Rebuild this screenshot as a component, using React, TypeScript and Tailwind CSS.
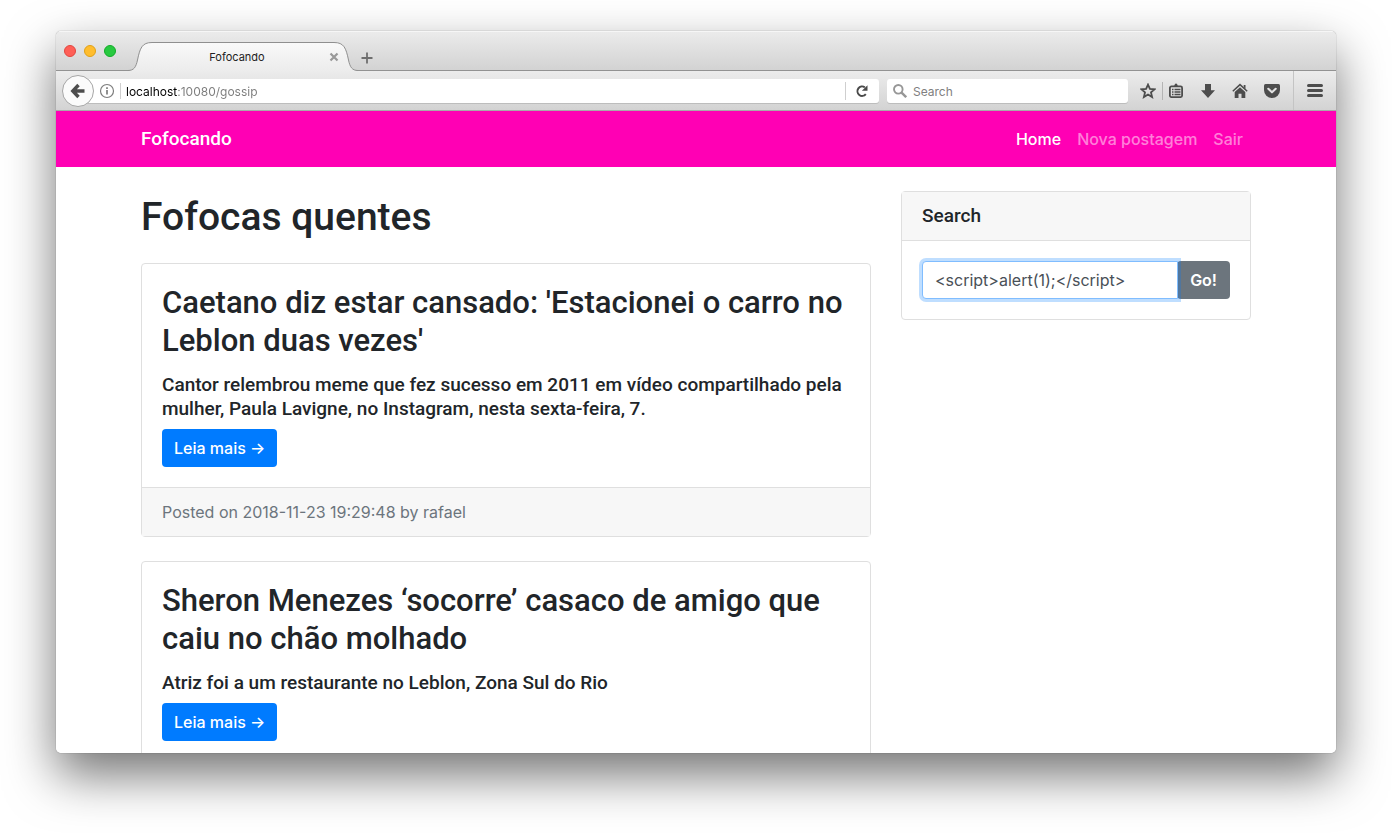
import React from "react";

type Post = {
  title: string;
  subtitle: string;
  footer?: string;
};

const posts: Post[] = [
  {
    title: "Caetano diz estar cansado: 'Estacionei o carro no Leblon duas vezes'",
    subtitle:
      "Cantor relembrou meme que fez sucesso em 2011 em vídeo compartilhado pela mulher, Paula Lavigne, no Instagram, nesta sexta-feira, 7.",
    footer: "Posted on 2018-11-23 19:29:48 by rafael",
  },
  {
    title: "Sheron Menezes ‘socorre’ casaco de amigo que caiu no chão molhado",
    subtitle: "Atriz foi a um restaurante no Leblon, Zona Sul do Rio",
  },
];

function TabStrip() {
  return (
    <div className="flex h-10 items-end border-t border-[#f6f6f6] bg-linear-to-b from-[#ebebeb] to-[#d2d2d2] shadow-[inset_0_-1px_0_#929292]">
      <div className="flex h-full w-[72px] items-center gap-2 pb-0.5 pl-2">
        <button aria-label="Close window" className="size-3 rounded-full border border-[#e2463f] bg-[#ff5f57]" />
        <button aria-label="Minimize window" className="size-3 rounded-full border border-[#e1a116] bg-[#ffbd2e]" />
        <button aria-label="Zoom window" className="size-3 rounded-full border border-[#12ac28] bg-[#28c940]" />
      </div>
      <div className="relative flex h-[30px] w-[230px] items-center pt-0.5">
        <svg viewBox="0 0 230 30" className="absolute inset-0 h-full w-full" aria-hidden="true">
          <defs>
            <linearGradient id="tab" x1="0" x2="0" y1="0" y2="1">
              <stop offset="0" stopColor="#f9f9f9" />
              <stop offset="1" stopColor="#ececec" />
            </linearGradient>
          </defs>
          <path
            d="M0 29.5C6 29.5 8 26 9.5 19C12 7 14 1.5 24 1.5H206C216 1.5 218 7 220.500 19C222 26 224 29.500 230 29.500V30H0Z"
            fill="url(#tab)"
          />
          <path
            d="M0 29.5C6 29.5 8 26 9.5 19C12 7 14 1.5 24 1.5H206C216 1.5 218 7 220.500 19C222 26 224 29.500 230 29.500"
            fill="none"
            stroke="#8f8f8f"
          />
        </svg>
        <span className="relative flex-1 pl-5 text-center text-[11px] leading-4 text-[#222]">Fofocando</span>
        <button aria-label="Close tab" className="relative mr-4 flex size-4 items-center justify-center">
          <svg viewBox="0 0 10 10" className="size-2.5" aria-hidden="true">
            <path d="M1.500 1.500L8.500 8.500M8.500 1.500L1.500 8.500" stroke="#999" strokeWidth="2.200" />
          </svg>
        </button>
      </div>
      <button aria-label="New tab" className="ml-px flex h-[26px] w-4 items-center justify-center">
        <svg viewBox="0 0 12 12" className="size-3" aria-hidden="true">
          <path d="M6 0.500V11.500M0.500 6H11.500" stroke="#6e6e6e" strokeWidth="1.800" />
        </svg>
      </button>
    </div>
  );
}

function Toolbar() {
  return (
    <div className="flex h-10 items-center border-b border-[#a9a9a9] bg-linear-to-b from-[#ececec] to-[#d3d3d3] pl-1.5">
      <button
        aria-label="Back"
        className="relative z-10 flex size-8 shrink-0 items-center justify-center rounded-full border border-[#a6a6a6] bg-[#fbfbfb]"
      >
        <svg viewBox="0 0 16 16" className="size-4" aria-hidden="true">
          <path d="M8.500 2L2.800 8L8.500 14M3 8H14.500" fill="none" stroke="#4d4d4d" strokeWidth="3.400" />
        </svg>
      </button>
      <div className="-ml-4 flex h-6 flex-1 items-center rounded-[3px] bg-white pl-[21px] shadow-[0_1px_0_#bdbdbd]">
        <svg viewBox="0 0 16 16" className="size-4 shrink-0" aria-hidden="true">
          <circle cx="8" cy="8" r="6.500" fill="none" stroke="#7d7d7d" strokeWidth="1.200" />
          <path d="M8 7V11.500M8 4.200V5.900" stroke="#7d7d7d" strokeWidth="1.700" />
        </svg>
        <span className="ml-[5px] h-4 w-px bg-[#cfcfcf]" />
        <input
          aria-label="Address"
          defaultValue="localhost:10080/gossip"
          className="ml-[5px] min-w-0 flex-1 bg-[linear-gradient(90deg,#000_52px,#7b7b7b_52px)] bg-clip-text pt-0.5 text-xs leading-4 text-transparent outline-none"
        />
        <button
          aria-label="Reload"
          className="flex h-[18px] w-[34px] shrink-0 items-center justify-center border-l border-[#cfcfcf]"
        >
          <svg viewBox="0 0 14 14" className="mr-0.5 size-3.5" aria-hidden="true">
            <path d="M10.800 10.200A4.700 4.700 0 1 1 9.800 3.300" fill="none" stroke="#4a4a4a" strokeWidth="2" />
            <path d="M12.500 1.200V6.800H6.900Z" fill="#4a4a4a" />
          </svg>
        </button>
      </div>
      <label className="ml-2 flex h-6 w-[241px] items-center rounded-[3px] bg-white pl-1.5 shadow-[0_1px_0_#bdbdbd]">
        <svg viewBox="0 0 14 14" className="size-3.5 shrink-0" aria-hidden="true">
          <circle cx="5.300" cy="5.300" r="4.300" fill="none" stroke="#979797" strokeWidth="1.900" />
          <path d="M8.300 8.300L13.200 13.200" stroke="#979797" strokeWidth="2.400" />
        </svg>
        <input
          aria-label="Search the web"
          placeholder="Search"
          className="ml-1.5 min-w-0 flex-1 pt-0.5 text-xs leading-4 outline-none placeholder:text-[#808080]"
        />
      </label>
      <button aria-label="Bookmark this page" className="ml-3 flex size-4 items-center justify-center">
        <svg viewBox="0 0 16 16" className="size-4" aria-hidden="true">
          <path
            d="M8 1.600L9.900 5.900L14.500 6.300L11 9.400L12.100 14L8 11.500L3.900 14L5 9.400L1.500 6.300L6.100 5.900Z"
            fill="none"
            stroke="#4d4d4d"
            strokeWidth="1.800"
          />
        </svg>
      </button>
      <span className="ml-1.5 h-[18px] w-px bg-[#b4b4b4]" />
      <button aria-label="Bookmarks" className="ml-[5px] flex size-4 items-center justify-center">
        <svg viewBox="0 0 16 16" className="size-4" aria-hidden="true">
          <rect x="1.900" y="3.400" width="12.200" height="10.700" rx="1.500" fill="none" stroke="#4d4d4d" strokeWidth="1.800" />
          <path d="M4.500 3.500L6.500 2.500Q6.500 0.500 8 0.500T9.500 2.500L11.500 3.500Z" fill="#4d4d4d" />
          <path d="M4 6.500H5.500M4 9H5.500M4 11.500H5.500M6.500 6.500H12.500M6.500 9H12.500M6.500 11.500H12.500" stroke="#4d4d4d" strokeWidth="1.300" />
        </svg>
      </button>
      <button aria-label="Downloads" className="ml-4 flex size-4 items-center justify-center">
        <svg viewBox="0 0 16 16" className="size-4" aria-hidden="true">
          <path d="M5 1H11V7.300H15L8 15L1 7.300H5Z" fill="#4d4d4d" />
        </svg>
      </button>
      <button aria-label="Home page" className="ml-4 flex size-4 items-center justify-center">
        <svg viewBox="0 0 16 16" className="size-4" aria-hidden="true">
          <path d="M0.800 8.300L8 1.600L15.200 8.300" fill="none" stroke="#4d4d4d" strokeWidth="1.500" />
          <path d="M11.700 2H13.500V6L11.700 4.300Z" fill="#4d4d4d" />
          <path d="M8 4.200L13.300 9V15H9.500V10.800H6.500V15H2.700V9Z" fill="#4d4d4d" />
        </svg>
      </button>
      <button aria-label="Save to Pocket" className="ml-4 flex size-4 items-center justify-center">
        <svg viewBox="0 0 16 16" className="size-4" aria-hidden="true">
          <path d="M1.500 1H14.500Q16 1 16 2.500V7A8 8 0 0 1 0 7V2.500Q0 1 1.500 1Z" fill="#4d4d4d" />
          <path d="M4.300 5.800L8 9.300L11.700 5.800" fill="none" stroke="#e2e2e2" strokeWidth="2.100" strokeLinecap="round" strokeLinejoin="round" />
        </svg>
      </button>
      <span className="ml-[13px] h-full w-px bg-[#c4c4c4]" />
      <button aria-label="Open menu" className="mx-[13px] flex size-4 items-center justify-center">
        <svg viewBox="0 0 16 16" className="size-4" aria-hidden="true">
          <path d="M1.500 2.500H14.500M1.500 7.500H14.500M1.500 12.500H14.500" stroke="#4d4d4d" strokeWidth="3" strokeLinecap="round" />
        </svg>
      </button>
    </div>
  );
}

function PostCard({ post }: { post: Post }) {
  return (
    <article className="mb-6 rounded border border-[#dfdfdf] bg-white">
      <div className="p-5">
        <h2 className="mb-[13px] font-['Roboto',sans-serif] text-[31px] leading-[38px] font-medium">{post.title}</h2>
        <h5 className="mb-2 font-['Roboto',sans-serif] text-[19px] leading-6 font-medium">{post.subtitle}</h5>
        <a
          href="#post"
          className="inline-flex h-[38px] items-center rounded bg-[#007bff] px-3 text-base font-medium text-white"
        >
          Leia mais →
        </a>
      </div>
      {post.footer && (
        <div className="border-t border-[#dfdfdf] bg-[#f7f7f7] px-5 py-3 text-base leading-6 text-[#6c757d]">
          {post.footer}
        </div>
      )}
    </article>
  );
}

function SearchCard() {
  return (
    <aside className="mt-6 w-[350px] shrink-0 rounded border border-[#dfdfdf] bg-white">
      <h5 className="border-b border-[#dfdfdf] bg-[#f7f7f7] px-5 py-3 font-['Roboto',sans-serif] text-[19px] leading-6 font-medium">
        Search
      </h5>
      <form className="flex p-5" onSubmit={(e) => e.preventDefault()}>
        <input
          aria-label="Search gossip"
          defaultValue="<script>alert(1);</script>"
          className="relative z-10 h-[38px] min-w-0 flex-1 rounded-l border border-[#80bdff] bg-white px-3 text-base text-[#495057] shadow-[0_0_0_3px_rgba(0,123,255,0.25)] outline-none"
        />
        <button className="-ml-px h-[38px] rounded bg-[#6c757d] px-[13px] text-base font-semibold text-white">
          Go!
        </button>
      </form>
    </aside>
  );
}

export default function App() {
  return (
    <div className="flex h-screen flex-col overflow-hidden bg-white px-14 pt-[31px] pb-20 font-['Inter',sans-serif] text-[#212529]">
      <div className="flex min-h-0 flex-1 flex-col overflow-hidden rounded-[5px] shadow-[0_0_1px_rgba(0,0,0,0.6),0_22px_50px_rgba(0,0,0,0.55)]">
        <TabStrip />
        <Toolbar />
        <div className="min-h-0 flex-1 overflow-hidden bg-white">
          <nav className="bg-[#ff00b4]">
            <div className="mx-auto flex h-14 max-w-[1140px] items-center justify-between px-[15px]">
              <a href="#home" className="font-['Roboto',sans-serif] text-[19px] font-medium text-white">
                Fofocando
              </a>
              <div className="flex gap-4 px-2 text-base font-medium">
                <a href="#home" className="text-white">
                  Home
                </a>
                <a href="#new" className="text-white/50">
                  Nova postagem
                </a>
                <a href="#logout" className="text-white/50">
                  Sair
                </a>
              </div>
            </div>
          </nav>
          <div className="mx-auto flex max-w-[1140px] items-start gap-[30px] px-[15px]">
            <main className="min-w-0 flex-1">
              <h1 className="mt-6 mb-5 font-['Roboto',sans-serif] text-[39px] leading-[52px] font-medium">
                Fofocas quentes
              </h1>
              {posts.map((post) => (
                <PostCard key={post.title} post={post} />
              ))}
            </main>
            <SearchCard />
          </div>
        </div>
      </div>
    </div>
  );
}
